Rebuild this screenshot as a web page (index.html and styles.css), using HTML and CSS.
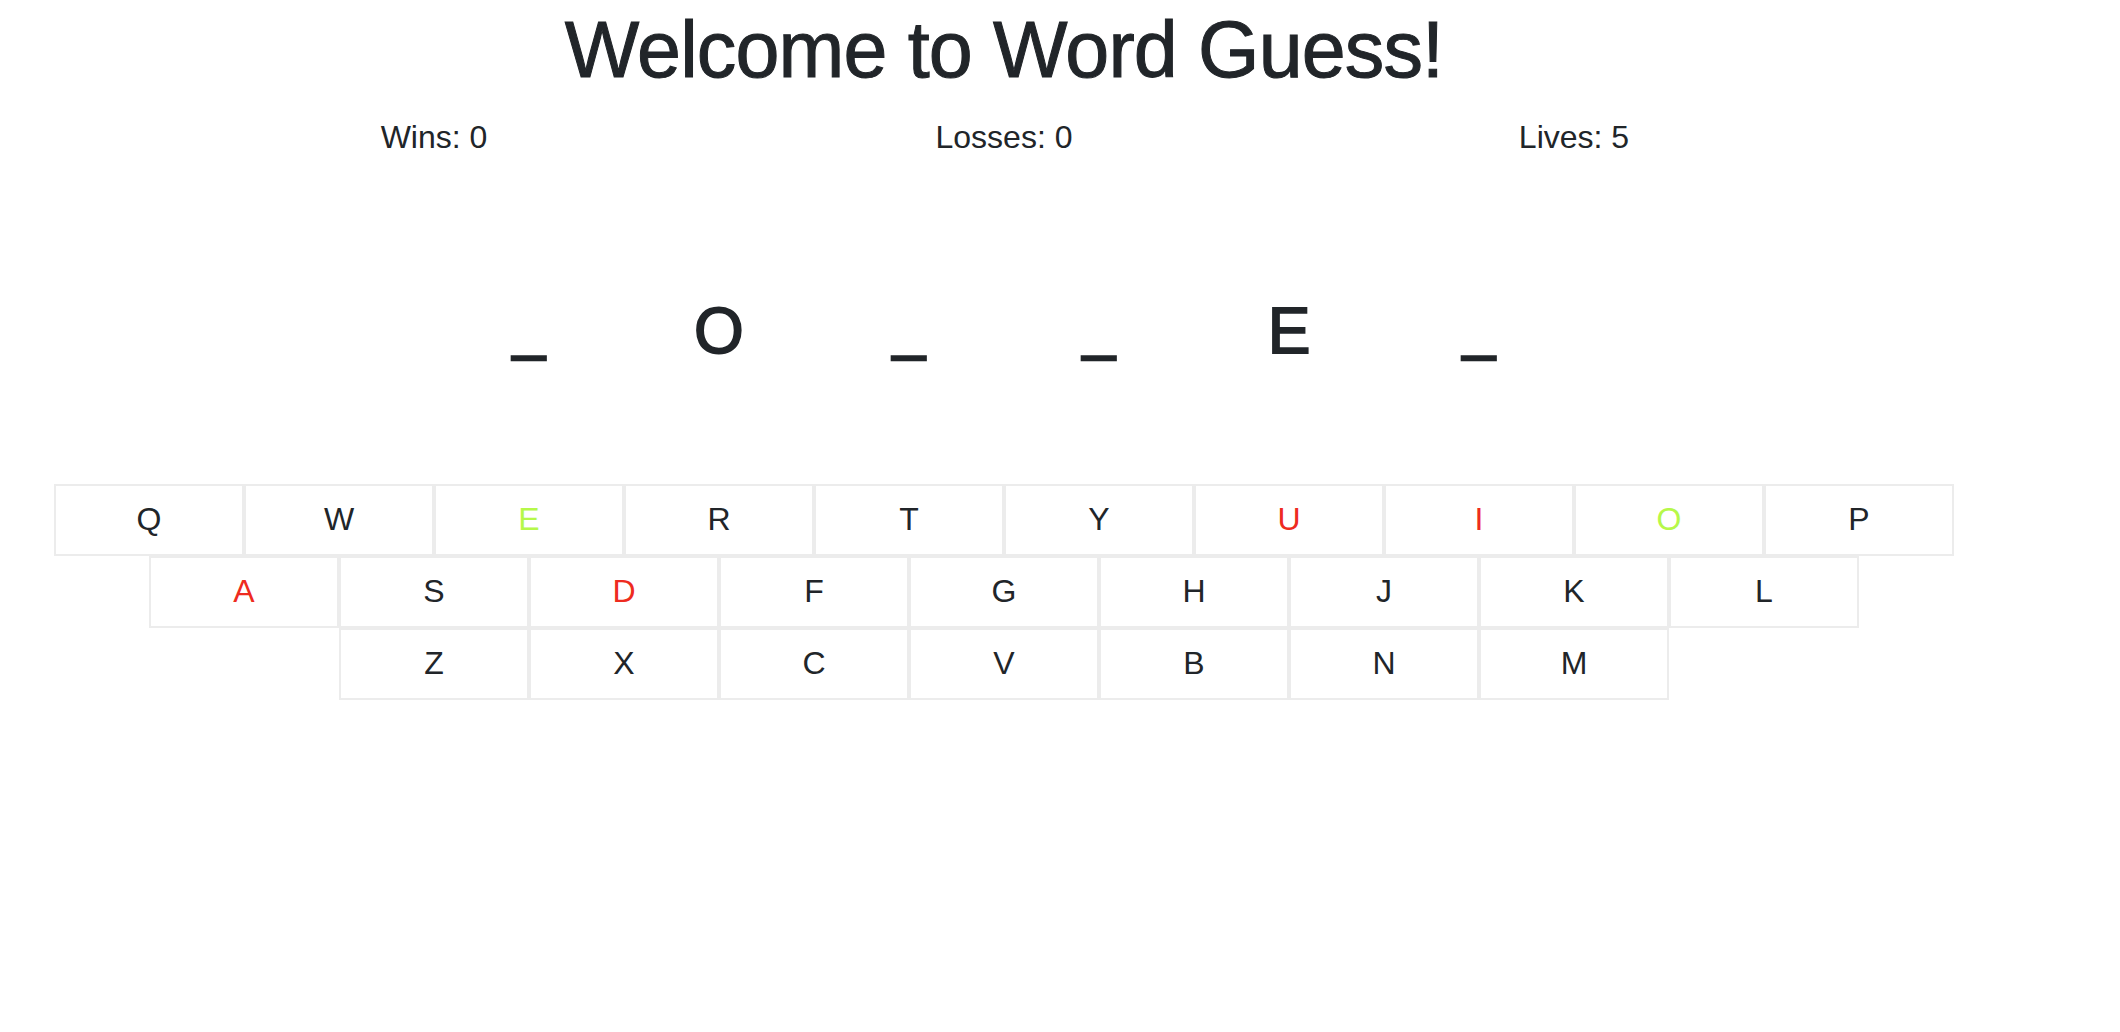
FILE: index.html
```html
<!DOCTYPE html>
<html lang="en">
<head>
<meta charset="utf-8">
<title>Word Guess</title>
<link rel="stylesheet" href="styles.css">
</head>
<body>
<div class="page">
  <h1 class="title">Welcome to Word Guess!</h1>
  <div class="stats">
    <div class="stat">Wins: 0</div>
    <div class="stat">Losses: 0</div>
    <div class="stat">Lives: 5</div>
  </div>
  <div class="word">
    <span class="slot blank">_</span>
    <span class="slot">O</span>
    <span class="slot blank">_</span>
    <span class="slot blank">_</span>
    <span class="slot">E</span>
    <span class="slot blank">_</span>
  </div>
  <div class="keyboard">
    <div class="row">
      <div class="key">Q</div><div class="key">W</div><div class="key hit">E</div><div class="key">R</div><div class="key">T</div><div class="key">Y</div><div class="key miss">U</div><div class="key miss">I</div><div class="key hit">O</div><div class="key">P</div>
    </div>
    <div class="row">
      <div class="key miss">A</div><div class="key">S</div><div class="key miss">D</div><div class="key">F</div><div class="key">G</div><div class="key">H</div><div class="key">J</div><div class="key">K</div><div class="key">L</div>
    </div>
    <div class="row">
      <div class="key">Z</div><div class="key">X</div><div class="key">C</div><div class="key">V</div><div class="key">B</div><div class="key">N</div><div class="key">M</div>
    </div>
  </div>
</div>
</body>
</html>
```

FILE: styles.css
```css
html, body {
  margin: 0;
  padding: 0;
  background: #ffffff;
}

body {
  font-family: "Liberation Sans", Arial, sans-serif;
  color: #212529;
}

.page {
  width: 2008px;
}

.title {
  margin: 3px 0 0;
  font-size: 79px;
  font-weight: 400;
  letter-spacing: -0.85px;
  line-height: 1.2;
  text-align: center;
  -webkit-text-stroke: 1px #212529;
}

.stats {
  width: 1710px;
  margin: 15px auto 0;
  display: grid;
  grid-template-columns: repeat(3, 1fr);
  font-size: 32px;
  line-height: 48px;
}

.stat {
  text-align: center;
}

.word {
  margin-top: 132px;
  display: flex;
  justify-content: center;
  align-items: flex-start;
  font-size: 64px;
  line-height: 76.8px;
  -webkit-text-stroke: 1.8px #212529;
}

.slot {
  width: 190px;
  text-align: center;
}

.slot.blank {
  line-height: 72px;
  font-size: 58px;
  -webkit-text-stroke: 2.4px #212529;
}

.keyboard {
  margin-top: 114px;
  display: flex;
  flex-direction: column;
  align-items: center;
}

.row {
  display: flex;
}

.key {
  box-sizing: border-box;
  width: 190px;
  height: 72px;
  border: 2px solid #ececec;
  display: flex;
  align-items: center;
  justify-content: center;
  font-size: 32px;
  color: #212529;
}

.key.hit {
  color: #b6f84a;
}

.key.miss {
  color: #ee2b20;
}
```
